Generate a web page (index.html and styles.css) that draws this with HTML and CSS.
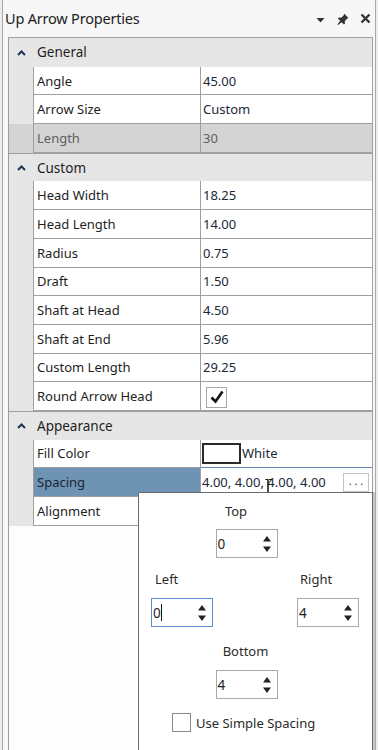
FILE: index.html
```html
<!DOCTYPE html>
<html>
<head>
<meta charset="utf-8">
<link rel="stylesheet" href="styles.css">
</head>
<body>
<div class="window">
  <div class="titlebar">
    <span class="title">Up Arrow Properties</span>
    <div class="tools">
      <svg class="t-drop" width="9" height="6" viewBox="0 0 9 6"><path d="M0.5 1h8L4.5 5.5z" fill="#333"/></svg>
      <svg class="t-pin" width="14" height="14" viewBox="0 0 14 14"><path d="M8 1.5l4.5 4.5-1.2 0.6-2.6 2.6 0.3 2.3-1 1-2.3-2.3L2 13l-0.6-0.6 2.8-3.6-2.3-2.3 1-1 2.3 0.3 2.6-2.6z" fill="#333"/></svg>
      <svg class="t-close" width="11" height="11" viewBox="0 0 11 11"><path d="M1.5 1.5l8 8M9.5 1.5l-8 8" stroke="#333" stroke-width="2.4"/></svg>
    </div>
  </div>
  <div class="panel">
    <div class="grid">
      <div class="cat first"><span class="caret"><svg width="9" height="6" viewBox="0 0 9 6"><path d="M1 5L4.5 1.5 8 5" fill="none" stroke="#1d3552" stroke-width="2"/></svg></span><span class="cat-label">General</span></div>
      <div class="row"><div class="gut"></div><div class="name">Angle</div><div class="val">45.00</div></div>
      <div class="row"><div class="gut"></div><div class="name">Arrow Size</div><div class="val">Custom</div></div>
      <div class="row disabled"><div class="gut"></div><div class="name">Length</div><div class="val">30</div></div>
      <div class="cat"><span class="caret"><svg width="9" height="6" viewBox="0 0 9 6"><path d="M1 5L4.5 1.5 8 5" fill="none" stroke="#1d3552" stroke-width="2"/></svg></span><span class="cat-label">Custom</span></div>
      <div class="row"><div class="gut"></div><div class="name">Head Width</div><div class="val">18.25</div></div>
      <div class="row"><div class="gut"></div><div class="name">Head Length</div><div class="val">14.00</div></div>
      <div class="row"><div class="gut"></div><div class="name">Radius</div><div class="val">0.75</div></div>
      <div class="row"><div class="gut"></div><div class="name">Draft</div><div class="val">1.50</div></div>
      <div class="row"><div class="gut"></div><div class="name">Shaft at Head</div><div class="val">4.50</div></div>
      <div class="row"><div class="gut"></div><div class="name">Shaft at End</div><div class="val">5.96</div></div>
      <div class="row"><div class="gut"></div><div class="name">Custom Length</div><div class="val">29.25</div></div>
      <div class="row"><div class="gut"></div><div class="name">Round Arrow Head</div><div class="val"><span class="check"><svg width="16" height="14" viewBox="0 0 16 14"><path d="M2.5 7.5l4 4 7-10" fill="none" stroke="#111" stroke-width="2.6"/></svg></span></div></div>
      <div class="cat"><span class="caret"><svg width="9" height="6" viewBox="0 0 9 6"><path d="M1 5L4.5 1.5 8 5" fill="none" stroke="#1d3552" stroke-width="2"/></svg></span><span class="cat-label">Appearance</span></div>
      <div class="row"><div class="gut"></div><div class="name">Fill Color</div><div class="val"><span class="swatch"></span>White</div></div>
      <div class="row selected"><div class="gut"></div><div class="name">Spacing</div><div class="val edit"><span class="edit-text">4.00, 4.00, 4.00, 4.00</span><span class="dots">. . .</span></div></div>
      <div class="row"><div class="gut"></div><div class="name">Alignment</div><div class="val"></div></div>
    </div>
    <svg class="ibeam" width="7" height="17" viewBox="0 0 7 17"><path d="M0.5 0.5h2.5v16h-2.5M6.5 0.5h-2.5M6.5 16.5h-2.5M3 0.5v16" fill="none" stroke="#111" stroke-width="1"/></svg>
    <div class="popup">
      <div class="p-top">
        <div class="lbl">Top</div>
        <div class="spin"><span class="num">0</span><span class="arrows"><svg width="10" height="22" viewBox="0 0 10 22"><path d="M1 8.5L5 3 9 8.5z" fill="#222"/><path d="M1 13.5L5 19 9 13.5z" fill="#222"/></svg></span></div>
      </div>
      <div class="p-mid">
        <div class="side">
          <div class="lbl left">Left</div>
          <div class="spin focus"><span class="num">0</span><span class="caretline"></span><span class="arrows"><svg width="10" height="22" viewBox="0 0 10 22"><path d="M1 8.5L5 3 9 8.5z" fill="#222"/><path d="M1 13.5L5 19 9 13.5z" fill="#222"/></svg></span></div>
        </div>
        <div class="side">
          <div class="lbl right">Right</div>
          <div class="spin"><span class="num">4</span><span class="arrows"><svg width="10" height="22" viewBox="0 0 10 22"><path d="M1 8.5L5 3 9 8.5z" fill="#222"/><path d="M1 13.5L5 19 9 13.5z" fill="#222"/></svg></span></div>
        </div>
      </div>
      <div class="p-bot">
        <div class="lbl">Bottom</div>
        <div class="spin"><span class="num">4</span><span class="arrows"><svg width="10" height="22" viewBox="0 0 10 22"><path d="M1 8.5L5 3 9 8.5z" fill="#222"/><path d="M1 13.5L5 19 9 13.5z" fill="#222"/></svg></span></div>
      </div>
      <div class="simple"><span class="cbox"></span><span>Use Simple Spacing</span></div>
    </div>
  </div>
</div>
</body>
</html>
```
FILE: styles.css
```css
* { box-sizing: border-box; }
html, body { margin: 0; padding: 0; }
body {
  width: 378px;
  height: 750px;
  overflow: hidden;
  background: #ededed;
  font-family: "Noto Sans", "Open Sans", sans-serif;
  color: #1e1e1e;
}
.window {
  height: 750px;
  display: flex;
  flex-direction: column;
  background: #f7f7f7;
  border-left: 1px solid #a9a9a9;
  border-right: 1px solid #a9a9a9;
  margin-left: 2px;
  width: 374px;
}
.titlebar {
  height: 37px;
  display: flex;
  align-items: center;
  padding-left: 2px;
  padding-right: 4px;
  flex-shrink: 0;
}
.title {
  font-size: 14.5px;
  color: #222;
  letter-spacing: -0.2px;
  margin-top: -1px;
}
.tools {
  margin-left: auto;
  display: flex;
  align-items: center;
}
.t-drop { margin-right: 11px; margin-top: 2px; }
.t-pin { margin-right: 10px; }
.panel {
  flex: 1;
  position: relative;
  margin-left: 5px;
  margin-right: 2px;
  background: #fdfdfd;
  border-left: 1px solid #9d9d9d;
  border-top: 1px solid #a0a0a0;
  border-right: 1px solid #a0a0a0;
}
.grid {
  display: flex;
  flex-direction: column;
}
.cat, .row {
  height: 28.7px;
  display: flex;
  flex-shrink: 0;
}
.cat {
  background: #e6e6e6;
  align-items: center;
  font-size: 13.5px;
  color: #1e1e1e;
  border-top: 1px solid #a0a0a0;
}
.cat.first { border-top: none; }
.caret {
  width: 24px;
  display: flex;
  justify-content: center;
  padding-left: 1px;
  margin-top: 1px;
}
.cat-label { padding-left: 4px; }
.gut {
  width: 24px;
  flex-shrink: 0;
  background: #e6e6e6;
}
.name, .val {
  display: flex;
  align-items: center;
  font-size: 13px;
  border-bottom: 1px solid #a0a0a0;
  background: #fff;
  white-space: nowrap;
}
.name {
  width: 168px;
  flex-shrink: 0;
  border-left: 1px solid #a0a0a0;
  border-right: 1px solid #a0a0a0;
  padding-left: 3px;
  color: #1e1e1e;
}
.val {
  flex: 1;
  padding-left: 2px;
  color: #1b2838;
}
.row.disabled .gut,
.row.disabled .name,
.row.disabled .val {
  background: #d4d4d4;
  color: #5e5e5e;
}
.row.selected .name {
  background: #6f93b3;
  color: #1a2433;
}
.val.edit {
  border-top: 1px solid #5e8ab4;
  margin-top: -1px;
  padding-left: 1px;
}
.dots {
  margin-left: auto;
  margin-right: 3px;
  width: 26px;
  height: 19px;
  border: 1px solid #c4c4c4;
  background: #fff;
  font-size: 11px;
  line-height: 14px;
  text-align: center;
  color: #333;
}
.check {
  width: 21px;
  height: 21px;
  border: 1px solid #a8a8a8;
  display: flex;
  align-items: center;
  justify-content: center;
  margin-left: 3px;
  margin-top: 2px;
}
.swatch {
  width: 39px;
  height: 21px;
  border: 2px solid #2a2a2a;
  background: #fff;
  margin-right: 1px;
  margin-left: -1px;
}
.ibeam {
  position: absolute;
  left: 256px;
  top: 441px;
}
.popup {
  position: absolute;
  left: 129px;
  top: 454px;
  width: 235px;
  height: 270px;
  background: #fff;
  border: 1px solid #6a6a6a;
  box-shadow: 2px 0 0 #c8c8c8;
  font-size: 13px;
  color: #2e2a2a;
  display: flex;
  flex-direction: column;
}
.lbl { line-height: 18px; }
.p-top, .p-bot {
  display: flex;
  flex-direction: column;
  align-items: center;
  padding-right: 18px;
}
.p-top { margin-top: 9px; }
.p-top .lbl { margin-bottom: 9px; margin-left: -21px; }
.p-bot { margin-top: 15px; }
.p-bot .lbl { margin-bottom: 10px; margin-left: -2px; }
.p-mid {
  display: flex;
  justify-content: space-between;
  padding-left: 12px;
  padding-right: 13px;
  margin-top: 12px;
}
.side { display: flex; flex-direction: column; }
.lbl.left { margin-left: 4px; margin-bottom: 10px; }
.lbl.right { margin-left: 3px; margin-bottom: 10px; }
.spin {
  width: 62px;
  height: 29px;
  border: 1px solid #a9a9a9;
  display: flex;
  align-items: center;
  background: #fff;
}
.spin.focus { border-color: #5a8ccc; }
.num { padding-left: 1px; font-size: 13.5px; color: #222; }
.caretline {
  width: 1px;
  height: 17px;
  background: #111;
}
.arrows {
  margin-left: auto;
  margin-right: 5px;
  display: flex;
}
.simple {
  display: flex;
  align-items: center;
  margin-top: 14px;
  padding-left: 33px;
  gap: 5px;
  font-size: 13px;
  color: #2a2a2a;
}
.cbox {
  width: 19px;
  height: 19px;
  border: 1px solid #8a8a8a;
  background: #fff;
}
```
